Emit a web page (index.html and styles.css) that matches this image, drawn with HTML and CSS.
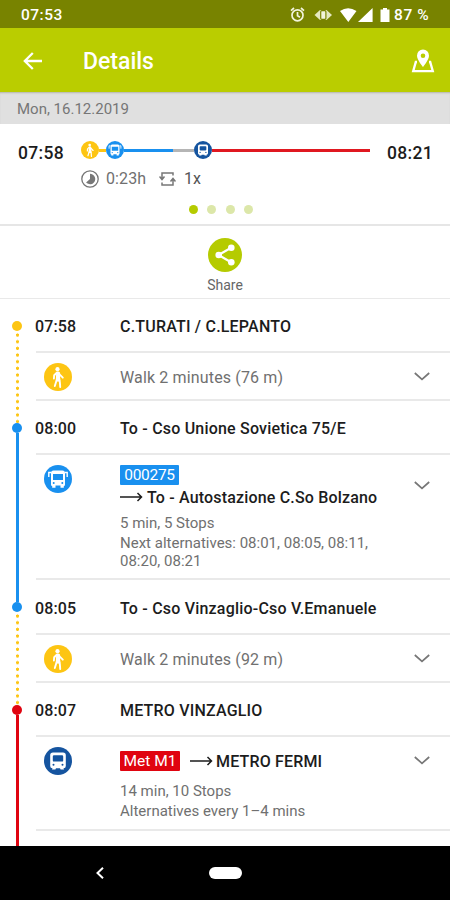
FILE: index.html
```html
<!DOCTYPE html>
<html lang="en">
<head>
<meta charset="utf-8">
<title>Details</title>
<link rel="stylesheet" href="styles.css">
</head>
<body>
<svg width="0" height="0" class="defs" aria-hidden="true">
  <symbol id="walk" viewBox="0 0 28 28">
    <circle cx="14" cy="14" r="14" fill="#fdc513"/>
    <circle cx="13.500" cy="6.200" r="2.100" fill="#fff"/>
    <path d="M13 9.500h1.500l1.300 2.200 3 3M12.500 10l-2.300 2.200-.3 3.300M13 16l-2.200 7M15 16l.9 3.500.3 4.500" fill="none" stroke="#fff" stroke-width="1.900" stroke-linecap="round" stroke-linejoin="round"/>
    <path d="M12.200 9h3.400l.9 9.500h-4.700z" fill="#fff"/>
  </symbol>
  <symbol id="bus" viewBox="0 0 28 28">
    <circle cx="14" cy="14" r="14" fill="#1990ef"/>
    <path fill="#fff" fill-rule="evenodd" d="M9.500 5.500h9q2.500 0 2.500 2.500v11.500q0 1.500-1.200 1.500v1.700h-3.300V20.500h-5v2.200H8.200V21Q7 21 7 19.500V8q0-2.500 2.500-2.500zM9 9v6h10V9zM9.700 17a1 1 0 1 0 0 2 1 1 0 0 0 0-2zm8.600 0a1 1 0 1 0 0 2 1 1 0 0 0 0-2z"/>
    <path d="M7 7.500H4.800V12M21 7.500h2.200V12" fill="none" stroke="#fff" stroke-width="1.400"/>
  </symbol>
  <symbol id="metro" viewBox="0 0 28 28">
    <circle cx="14" cy="14" r="14" fill="#15549f"/>
    <path fill="#fff" fill-rule="evenodd" d="M9 5.500h10q2.800 0 2.800 2.800v10.700q0 2.300-2.300 2.300l.5 1.200h-3.400l-.6-1.200h-4l-.6 1.200H8l.5-1.200q-2.300 0-2.300-2.300V8.300Q6.200 5.500 9 5.500zM10 8.300q-1.200 0-1.200 1.200v3.900q0 1.200 1.200 1.200h8q1.200 0 1.200-1.200V9.500q0-1.200-1.200-1.200zM9.500 16.800a1 1 0 1 0 0 2 1 1 0 0 0 0-2zm9 0a1 1 0 1 0 0 2 1 1 0 0 0 0-2z"/>
  </symbol>
  <symbol id="chevron" viewBox="0 0 16 9">
    <path d="M.8 1 8 7.300 15.200 1" fill="none" stroke="#777" stroke-width="1.700"/>
  </symbol>
  <symbol id="arrow" viewBox="0 0 23 10">
    <path d="M0 5h21.500M17.500 1 21.500 5l-4 4" fill="none" stroke="currentColor" stroke-width="1.500"/>
  </symbol>
</svg>

<header>
  <div class="status">
    <span class="clock">07:53</span>
    <svg class="status-icons" width="102" height="18" viewBox="0 0 102 18">
      <g fill="none" stroke="#f2f4dc" stroke-width="1.700">
        <circle cx="7.500" cy="9.300" r="5.500"/>
        <path d="M7.500 6v3.800l2.500 1.500M1 4.600 4 2M14 4.600 11 2"/>
      </g>
      <path d="M24.500 9 30 4h6.500L42 9l-5.500 5H30z" fill="#e4e8c0"/>
      <rect x="30.700" y="4.700" width="5.200" height="8.600" rx="1" fill="#f2f4dc" stroke="#788300" stroke-width="1.200"/>
      <path d="M50 5q8-5.500 16.500 0L58.300 16zM82.600 2v14H68z" fill="#fff"/>
      <path d="M93 2h4v1.500h2.500V16h-9V3.500H93z" fill="#fff"/>
    </svg>
    <span class="battery">87 %</span>
  </div>
  <div class="appbar">
    <svg width="20" height="18" viewBox="0 0 20 18"><path d="M19 9H2M9.800 1 1.800 9l8 8" fill="none" stroke="#fff" stroke-width="2.300"/></svg>
    <h1>Details</h1>
    <svg class="map" width="24" height="24" viewBox="0 0 24 24">
      <path fill="#fff" fill-rule="evenodd" d="M12 .5a6 6 0 0 0-6 6.200C6 10.700 12 18 12 18S18 10.700 18 6.700A6 6 0 0 0 12 .5zM12 4.400a2.300 2.300 0 1 1 0 4.600 2.300 2.300 0 0 1 0-4.600z"/>
      <path d="M6 13H4.800L2.200 22.200h19.600L19.200 13H18" fill="none" stroke="#fff" stroke-width="2.300"/>
    </svg>
  </div>
</header>
<div class="date">Mon, 16.12.2019</div>

<section class="summary">
  <div class="trip">
    <span class="time">07:58</span>
    <div class="middle">
      <div class="bar">
        <svg width="18" height="18"><use href="#walk"/></svg>
        <i class="seg s-walk"></i>
        <svg width="18" height="18"><use href="#bus"/></svg>
        <i class="seg s-bus"></i><i class="seg s-wait"></i>
        <svg width="18" height="18"><use href="#metro"/></svg>
        <i class="seg s-metro"></i>
      </div>
      <div class="facts">
        <svg width="18" height="18" viewBox="0 0 18 18"><circle cx="9" cy="9" r="8.200" fill="none" stroke="#757575" stroke-width="1.300"/><path d="M9 3.800a5.200 5.200 0 1 1-3.900 8.600L9 9z" fill="#777"/></svg>
        <span class="dur">0:23h</span>
        <svg width="17" height="16" viewBox="0 0 17 16"><path d="M8 2H3v6M.5 5.500 3 8.500l2.500-3M6 2h8v2.500M3 11.500V14h11V8M11.500 10.500 14 7.500l2.500 3" fill="none" stroke="#777" stroke-width="1.500"/></svg>
        <span class="chg">1x</span>
      </div>
    </div>
    <span class="time">08:21</span>
  </div>
  <div class="pager"><i class="on"></i><i></i><i></i><i></i></div>
</section>

<section class="share">
  <svg width="34" height="34" viewBox="0 0 34 34"><circle cx="17" cy="17" r="17" fill="#b5cb00"/><path d="M23.500 9.500 10.500 17l13 7.500" fill="none" stroke="#fff" stroke-width="2.200"/><g fill="#fff"><circle cx="23.300" cy="9.800" r="3.300"/><circle cx="10.700" cy="17" r="3.300"/><circle cx="23.300" cy="24.200" r="3.300"/></g></svg>
  <span>Share</span>
</section>

<main>
  <section class="leg walk">
    <div class="rail"><i class="dot"></i><i class="line"></i></div>
    <div class="rows">
      <div class="stop"><time>07:58</time><b>C.TURATI / C.LEPANTO</b></div>
      <div class="detail short">
        <svg class="mode" width="28" height="28"><use href="#walk"/></svg>
        <p class="info walktext">Walk 2 minutes (76 m)</p>
        <svg class="chev" width="16" height="9"><use href="#chevron"/></svg>
      </div>
    </div>
  </section>
  <section class="leg bus">
    <div class="rail"><i class="dot"></i><i class="line"></i></div>
    <div class="rows">
      <div class="stop"><time>08:00</time><b>To - Cso Unione Sovietica 75/E</b></div>
      <div class="detail">
        <svg class="mode" width="28" height="28"><use href="#bus"/></svg>
        <div class="info">
          <span class="tag">000275</span>
          <div class="dir"><svg width="23" height="10"><use href="#arrow"/></svg><b>To - Autostazione C.So Bolzano</b></div>
          <p class="first">5 min, 5 Stops</p>
          <p class="alt">Next alternatives: 08:01, 08:05, 08:11,<br>08:20, 08:21</p>
        </div>
        <svg class="chev" width="16" height="9"><use href="#chevron"/></svg>
      </div>
    </div>
  </section>
  <section class="leg walk second">
    <div class="rail"><i class="dot"></i><i class="line"></i></div>
    <div class="rows">
      <div class="stop"><time>08:05</time><b>To - Cso Vinzaglio-Cso V.Emanuele</b></div>
      <div class="detail short">
        <svg class="mode" width="28" height="28"><use href="#walk"/></svg>
        <p class="info walktext">Walk 2 minutes (92 m)</p>
        <svg class="chev" width="16" height="9"><use href="#chevron"/></svg>
      </div>
    </div>
  </section>
  <section class="leg metro">
    <div class="rail"><i class="dot"></i><i class="line"></i></div>
    <div class="rows">
      <div class="stop"><time>08:07</time><b>METRO VINZAGLIO</b></div>
      <div class="detail">
        <svg class="mode" width="28" height="28"><use href="#metro"/></svg>
        <div class="info">
          <div class="dir inline"><span class="tag">Met M1</span><svg width="23" height="10"><use href="#arrow"/></svg><b>METRO FERMI</b></div>
          <p class="first">14 min, 10 Stops</p>
          <p class="alt">Alternatives every 1–4 mins</p>
        </div>
        <svg class="chev" width="16" height="9"><use href="#chevron"/></svg>
      </div>
    </div>
  </section>
</main>

<nav>
  <svg width="8" height="12" viewBox="0 0 8 12"><path d="M7 .8 1.500 6 7 11.200" fill="none" stroke="#fff" stroke-width="2"/></svg>
  <i class="home"></i>
</nav>
</body>
</html>
```
FILE: styles.css
```css
* { box-sizing: border-box; }
body {
  margin: 0;
  width: 450px;
  height: 900px;
  display: flex;
  flex-direction: column;
  overflow: hidden;
  background: #fff;
  color: #1c1c1c;
  font-family: Roboto, sans-serif;
}
svg { display: block; flex: none; }
.defs { display: none; }
i { display: block; }
p, h1 { margin: 0; }

.status {
  height: 28px;
  padding: 2px 0 0 21px;
  display: flex;
  align-items: center;
  background: #788300;
  color: #fff;
  font-size: 15.500px;
  font-weight: 500;
}
.clock { width: 269px; letter-spacing: .5px; }
.battery { margin-left: 2px; letter-spacing: .6px; }
.appbar {
  height: 64px;
  padding: 2px 15px 0 23px;
  display: flex;
  align-items: center;
  background: #bacd00;
  color: #fff;
}
h1 { margin-left: 40px; font-size: 23px; font-weight: 500; letter-spacing: 0; }
.map { margin-left: auto; }
.date {
  height: 32px;
  padding-left: 17px;
  background: #e0e0e0;
  box-shadow: inset 0 2px 2px -1px #b5b5a8;
  color: #767676;
  font-size: 15px;
  line-height: 34px;
}

.summary { height: 102px; border-bottom: 2px solid #e6e6e6; }
.trip { height: 77px; display: flex; padding: 17px 17px 0 18px; }
.time { width: 63px; font-size: 17.500px; font-weight: 500; line-height: 24px; letter-spacing: .3px; }
.trip > .time:last-child { width: auto; margin-left: auto; }
.bar { display: flex; align-items: center; height: 18px; }
.seg { height: 3px; }
.s-walk { width: 7px; background: #fdc513; }
.s-bus { width: 49px; background: #1990ef; }
.s-wait { width: 21px; background: #b5b5b5; }
.s-metro { width: 158px; background: #e01820; }
.facts { display: flex; align-items: center; margin-top: 10px; color: #707070; font-size: 16px; line-height: 18px; }
.dur { width: 53px; margin: 1px 0 0 7px; letter-spacing: .1px; }
.chg { margin: 1px 0 0 8px; color: #555; }
.pager { display: flex; justify-content: center; gap: 9.300px; margin-top: 4px; padding-right: 8px; }
.pager i { width: 9px; height: 9px; border-radius: 50%; background: #dce7a9; }
.pager .on { background: #b5cb00; }

.share {
  height: 73px;
  padding-top: 12px;
  display: flex;
  flex-direction: column;
  align-items: center;
  border-bottom: 1px solid #e9e9e9;
  color: #666;
  font-size: 14px;
  line-height: 18px;
}
.share span { margin-top: 4px; }

main { height: 547px; overflow: hidden; }
.leg { display: flex; padding-left: 12px; }
.walk { --c: #fdc513; }
.bus { --c: #1990ef; }
.metro { --c: #e00410; }
.rail {
  width: 10px;
  margin: 22px 14px -22px 0;
  display: flex;
  flex-direction: column;
  align-items: center;
}
.dot { width: 10px; height: 10px; border-radius: 50%; background: var(--c); flex: none; }
.second .dot { background: #1990ef; }
.line { width: 3px; flex: 1; background: var(--c); }
.walk .line { background: radial-gradient(circle at 1.500px 4px, var(--c) 1.300px, transparent 1.900px) 0 0 / 3px 6.670px; }
.rows { flex: 1; }
.stop {
  height: 54px;
  border-bottom: 2px solid #e9e9e9;
  display: flex;
  font-size: 16px;
  font-weight: 500;
  line-height: 55px;
  letter-spacing: .2px;
  white-space: nowrap;
}
.second .stop { height: 55px; line-height: 57px; }
.stop time { width: 85px; margin-left: -1px; letter-spacing: .1px; }
b { font-weight: 500; }
.detail {
  height: 125px;
  padding-top: 10px;
  border-bottom: 2px solid #e9e9e9;
  display: flex;
  align-items: flex-start;
  color: #707070;
}
.metro .detail { height: 94px; }
.detail.short { height: 48px; }
.mode { margin: 0 48px 0 8px; }
.info { flex: 1; font-size: 15px; line-height: 18px; white-space: nowrap; }
.chev { margin: 16px 20px 0 0; }
.short .chev { margin-top: 9px; }
.metro .chev { margin-top: 9px; }
.walktext { padding-top: 1px; line-height: 28px; font-size: 16px; letter-spacing: .15px; }
.tag {
  display: block;
  width: 59px;
  height: 20px;
  border-radius: 1px;
  background: var(--c);
  color: #fff;
  font-size: 15.500px;
  font-weight: 400;
  line-height: 21px;
  letter-spacing: -.3px;
  text-align: center;
}
.dir { display: flex; align-items: center; height: 22px; margin-top: 1px; color: #1c1c1c; font-size: 16px; letter-spacing: .17px; }
.dir b { margin: 1px 0 0 4px; }
.inline { height: 20px; margin-top: 4px; }
.inline .tag { width: 60px; letter-spacing: 0; }
.inline svg { margin-left: 10px; }
.inline b { margin-left: 3px; }
.first { margin-top: 6px; }
.metro .first { margin-top: 11px; }
.alt { margin-top: 2px; }

nav { height: 54px; padding-left: 96px; display: flex; align-items: center; background: #000; flex: none; }
.home { width: 33px; height: 12px; margin-left: 105px; border-radius: 6px; background: #fff; }
```
